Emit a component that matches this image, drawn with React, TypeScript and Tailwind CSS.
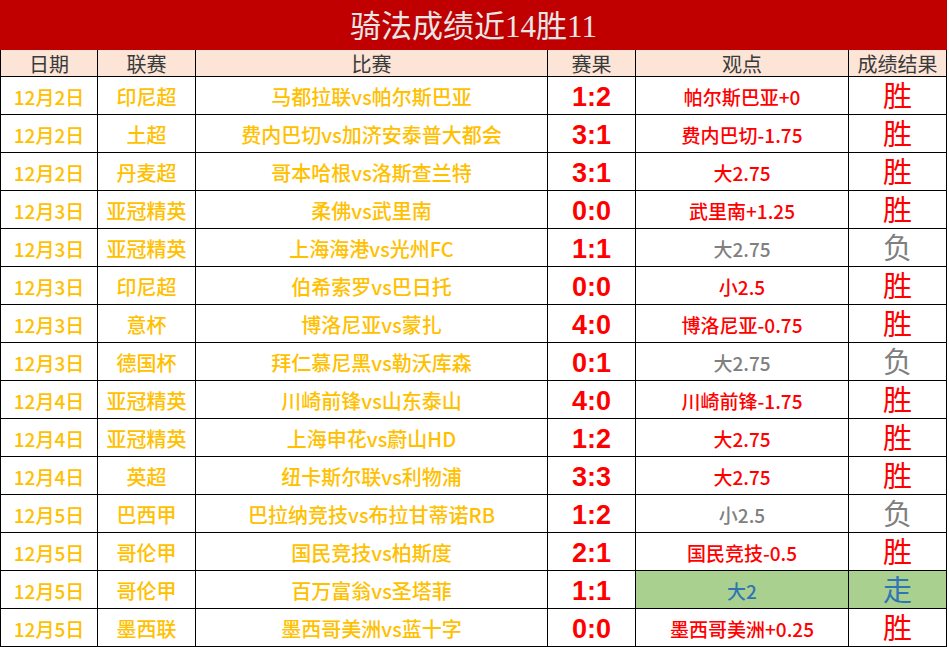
import React from 'react';

type Row = {
  date: string;
  league: string;
  match: string;
  score: string;
  tip: string;
  result: '胜' | '负' | '走';
};

const rows: Row[] = [
  { date: '12月2日', league: '印尼超', match: '马都拉联vs帕尔斯巴亚', score: '1:2', tip: '帕尔斯巴亚+0', result: '胜' },
  { date: '12月2日', league: '土超', match: '费内巴切vs加济安泰普大都会', score: '3:1', tip: '费内巴切-1.75', result: '胜' },
  { date: '12月2日', league: '丹麦超', match: '哥本哈根vs洛斯查兰特', score: '3:1', tip: '大2.75', result: '胜' },
  { date: '12月3日', league: '亚冠精英', match: '柔佛vs武里南', score: '0:0', tip: '武里南+1.25', result: '胜' },
  { date: '12月3日', league: '亚冠精英', match: '上海海港vs光州FC', score: '1:1', tip: '大2.75', result: '负' },
  { date: '12月3日', league: '印尼超', match: '伯希索罗vs巴日托', score: '0:0', tip: '小2.5', result: '胜' },
  { date: '12月3日', league: '意杯', match: '博洛尼亚vs蒙扎', score: '4:0', tip: '博洛尼亚-0.75', result: '胜' },
  { date: '12月3日', league: '德国杯', match: '拜仁慕尼黑vs勒沃库森', score: '0:1', tip: '大2.75', result: '负' },
  { date: '12月4日', league: '亚冠精英', match: '川崎前锋vs山东泰山', score: '4:0', tip: '川崎前锋-1.75', result: '胜' },
  { date: '12月4日', league: '亚冠精英', match: '上海申花vs蔚山HD', score: '1:2', tip: '大2.75', result: '胜' },
  { date: '12月4日', league: '英超', match: '纽卡斯尔联vs利物浦', score: '3:3', tip: '大2.75', result: '胜' },
  { date: '12月5日', league: '巴西甲', match: '巴拉纳竞技vs布拉甘蒂诺RB', score: '1:2', tip: '小2.5', result: '负' },
  { date: '12月5日', league: '哥伦甲', match: '国民竞技vs柏斯度', score: '2:1', tip: '国民竞技-0.5', result: '胜' },
  { date: '12月5日', league: '哥伦甲', match: '百万富翁vs圣塔菲', score: '1:1', tip: '大2', result: '走' },
  { date: '12月5日', league: '墨西联', match: '墨西哥美洲vs蓝十字', score: '0:0', tip: '墨西哥美洲+0.25', result: '胜' },
];

const sans = "font-['Liberation_Sans','Noto_Sans_CJK_SC',sans-serif]";
const cjk = "font-['Noto_Sans_CJK_SC',sans-serif]";
const serif = "font-['Liberation_Serif','Noto_Sans_CJK_SC',serif]";

const headers = ['日期', '联赛', '比赛', '赛果', '观点', '成绩结果'];

export default function App() {
  return (
    <div className="w-[949px] h-[647px] bg-white overflow-hidden">
      {/* Title */}
      <div className={`w-[947px] h-[50px] bg-[#c00000] flex items-center justify-center ${serif}`}>
        <span className="text-[31px] leading-none text-[#e7e6e6] pt-[2px]">骑法成绩近14胜11</span>
      </div>

      {/* Table */}
      <div className="w-[947px] bg-black px-px pb-px grid grid-cols-[96px_97px_351px_87px_212px_97px] grid-rows-[26px_repeat(15,37px)] gap-px">
        {headers.map((h) => (
          <div
            key={h}
            className={`bg-[#fce4d6] flex items-center justify-center text-[20px] leading-none text-[#3a3a3a] pt-[3px] ${serif}`}
          >
            {h}
          </div>
        ))}

        {rows.map((r, i) => {
          const push = r.result === '走';
          const lose = r.result === '负';
          const tipColor = push ? 'text-[#2f75b5]' : lose ? 'text-[#808080]' : 'text-[#ff0000]';
          const resColor = push ? 'text-[#2f75b5]' : lose ? 'text-[#7f7f7f]' : 'text-[#ff0000]';
          return (
            <React.Fragment key={i}>
              <div className={`bg-white flex items-center justify-center text-[19px] leading-none font-medium text-[#ffc000] pt-[2px] ${cjk}`}>
                {r.date}
              </div>
              <div className={`bg-white flex items-center justify-center text-[20px] leading-none font-medium text-[#ffc000] pt-[2px] ${cjk}`}>
                {r.league}
              </div>
              <div className={`bg-white flex items-center justify-center text-[20px] leading-none font-medium text-[#ffc000] pt-[2px] ${cjk}`}>
                {r.match}
              </div>
              <div className={`bg-white flex items-center justify-center text-[27px] leading-none font-bold text-[#ff0000] pt-[4px] ${sans}`}>
                {r.score}
              </div>
              <div
                className={`flex items-center justify-center text-[19px] leading-none font-medium pt-[2px] ${tipColor} ${push ? 'bg-[#a9d08e]' : 'bg-white'} ${cjk}`}
              >
                {r.tip}
              </div>
              <div
                className={`flex items-center justify-center text-[29px] leading-none pb-[2px] ${resColor} ${push ? 'bg-[#a9d08e]' : 'bg-white'} ${cjk}`}
              >
                {r.result}
              </div>
            </React.Fragment>
          );
        })}
      </div>
    </div>
  );
}
